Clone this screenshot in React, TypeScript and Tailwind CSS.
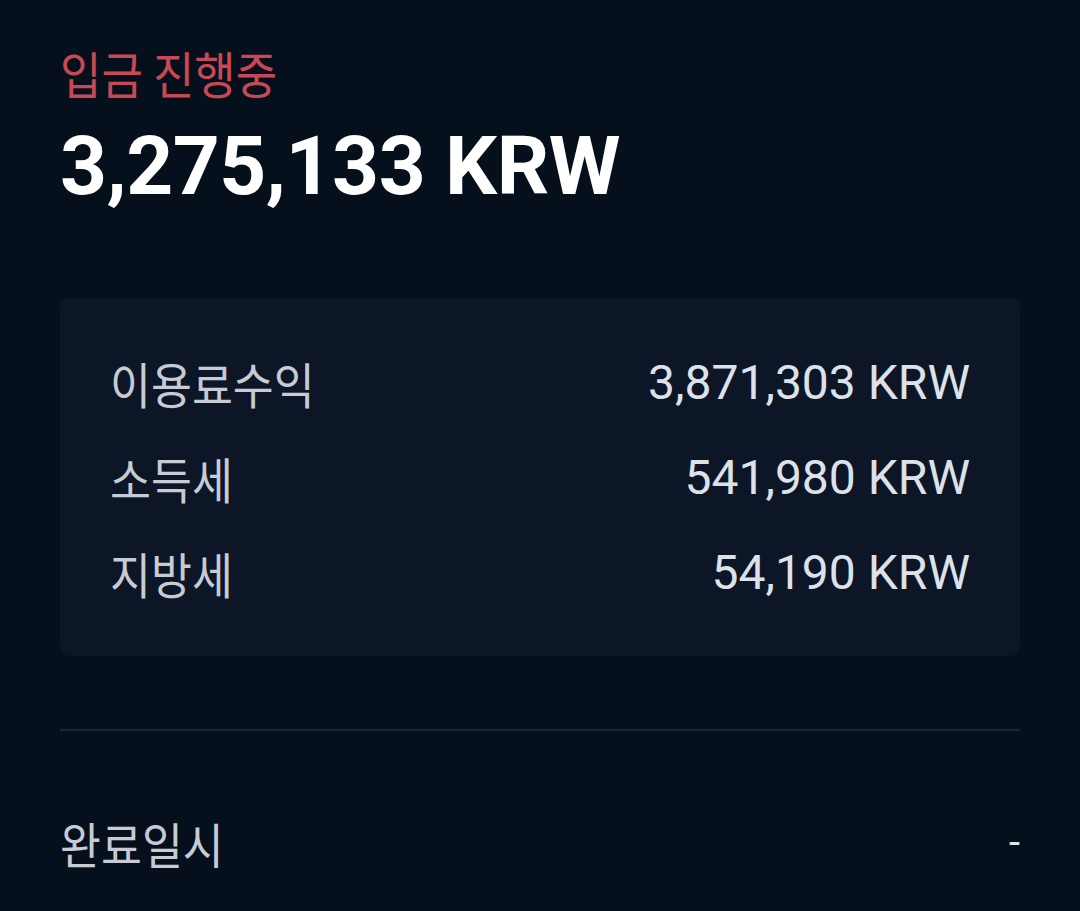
import React from "react";

const rows = [
  { label: "이용료수익", value: "3,871,303 KRW" },
  { label: "소득세", value: "541,980 KRW" },
  { label: "지방세", value: "54,190 KRW" },
];

export default function App() {
  return (
    <div className="w-[1080px] h-[911px] overflow-hidden bg-[#06101d] px-[60px] font-['Roboto','Noto_Sans_CJK_KR',sans-serif]">
      <div className="pt-[49px] h-[97px] leading-[48px] text-[45px] text-[#c94855]">
        <span className="inline-block scale-y-[1.12] font-['Noto_Sans_CJK_KR',sans-serif]">입금 진행중</span>
      </div>
      <div className="mt-[21px] h-[96px] leading-[96px] text-[82px] font-bold text-white tracking-[-0.5px]">
        3,275,133 KRW
      </div>
      <div className="mt-[84px] h-[358px] rounded-[10px] bg-[#0c1627] px-[50px] pt-[37px]">
        {rows.map((r) => (
          <div key={r.label} className="flex h-[95px] items-center justify-between">
            <span className="inline-block scale-y-[1.1] text-[44.5px] leading-[56px] text-[#c6cbd4] font-['Noto_Sans_CJK_KR',sans-serif]">
              {r.label}
            </span>
            <span className="text-[48px] leading-[56px] text-[#dde2ea] font-['Roboto',sans-serif]">
              {r.value}
            </span>
          </div>
        ))}
      </div>
      <div className="mt-[73px] h-[2px] bg-[#1c2533]" />
      <div className="mt-[82px] flex h-[60px] items-center justify-between">
        <span className="inline-block scale-y-[1.1] text-[44.5px] leading-[56px] text-[#c6cbd4] font-['Noto_Sans_CJK_KR',sans-serif]">
          완료일시
        </span>
        <span className="text-[40px] leading-[56px] text-[#dde2ea] font-['Roboto',sans-serif]">-</span>
      </div>
    </div>
  );
}
